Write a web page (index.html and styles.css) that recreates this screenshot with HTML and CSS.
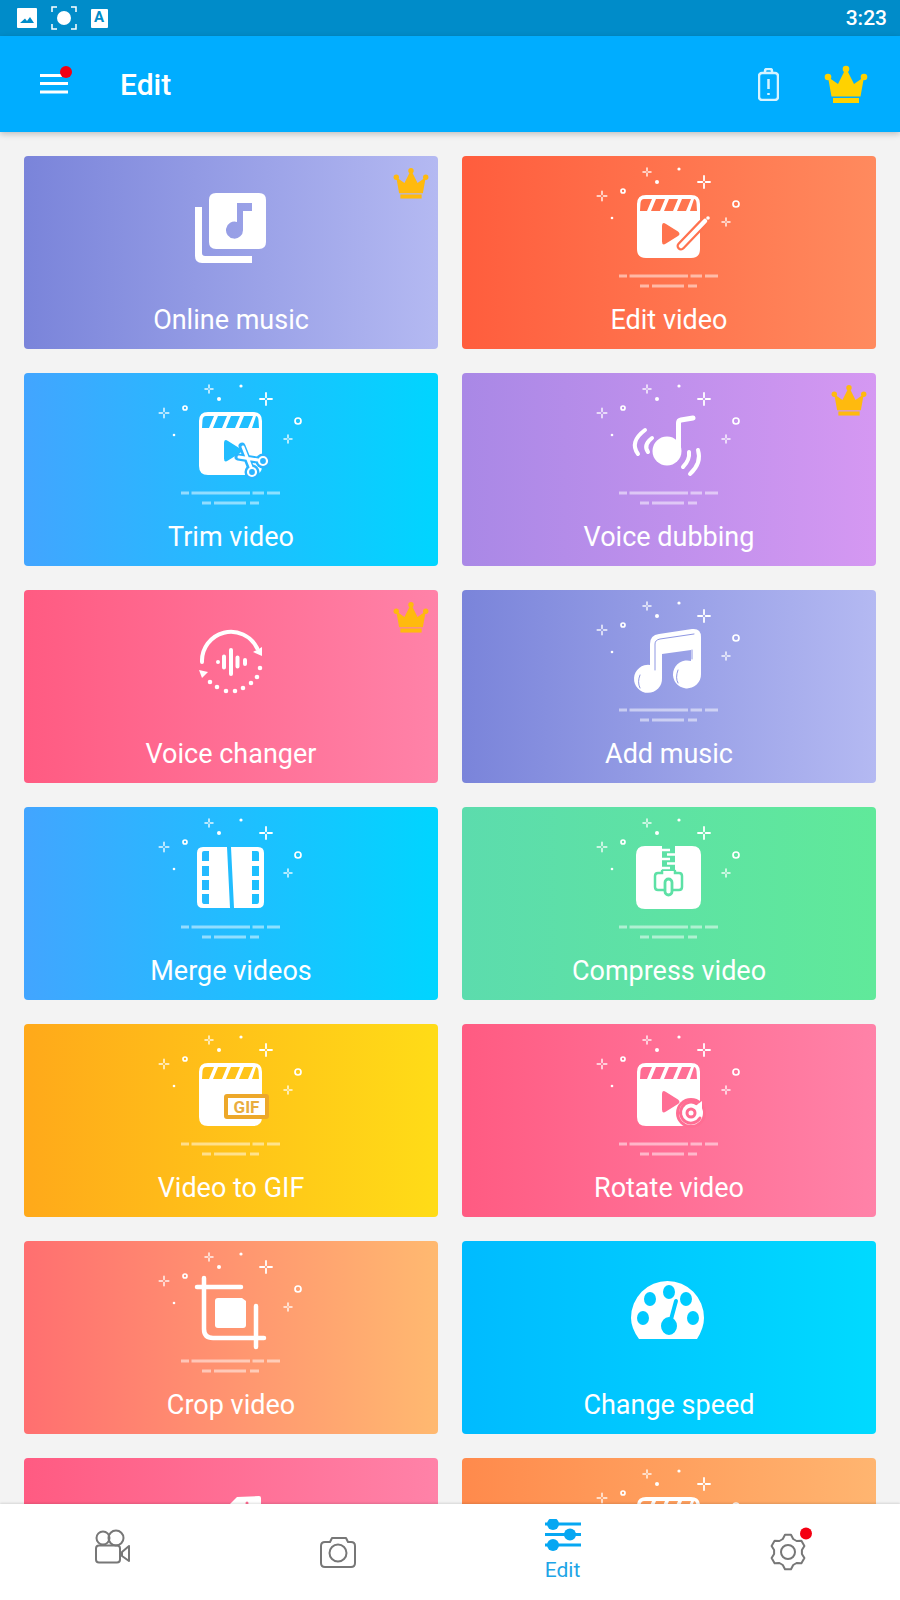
FILE: index.html
```html
<!DOCTYPE html>
<html lang="en">
<head>
    <meta charset="UTF-8">
    <meta name="viewport" content="width=device-width, initial-scale=1.0">
    <title>Edit</title>
    <link rel="stylesheet" href="styles.css">
</head>
<body>
    <svg class="defs" width="0" height="0">
        <defs>
            <g id="sparkles">
                <path class="spark thin" d="M135.200 40h3.300M141.500 40h3.300M140 35.200v3.300M140 41.500v3.300"/>
                <path class="spark thin" d="M181 16h2.700M186.300 16h2.700M185 12v2.700M185 17.300v2.700"/>
                <path class="spark" d="M236 26h4.300M243.700 26h4.300M242 20v4.300M242 27.700v4.300"/>
                <path class="spark thin" d="M260 66h2.700M265.300 66h2.700M264 62v2.700M264 67.300v2.700"/>
                <circle class="dot" cx="195" cy="26" r="2"/>
                <circle class="dot" cx="217" cy="13" r="1.600"/>
                <circle class="dot" cx="150" cy="62" r="1.300"/>
                <circle class="ring" cx="161" cy="35" r="2"/>
                <circle class="ring" cx="274" cy="48" r="3"/>
                <path class="dash" d="M157 120h8M167.500 120h58.500M228.500 120h11.500M243 120h13"/>
                <path class="dash" d="M178 130h9M190 130h32M226 130h9"/>
            </g>
            <path id="clapper" fill-rule="evenodd" d="M184 39H229Q238 39 238 48V93Q238 102 229 102H184Q175 102 175 93V48Q175 39 184 39ZM182 43Q179 43 178.500 47L178 55H185L190 43ZM194 43L189 55H198L203 43ZM207 43L202 55H211L216 43ZM220 43L215 55H224L229 43ZM232 43L228 55H235L234.500 47Q234 43 232 43Z"/>
            <path id="clapper-play" fill-rule="evenodd" d="M184 39H229Q238 39 238 48V93Q238 102 229 102H184Q175 102 175 93V48Q175 39 184 39ZM182 43Q179 43 178.500 47L178 55H185L190 43ZM194 43L189 55H198L203 43ZM207 43L202 55H211L216 43ZM220 43L215 55H224L229 43ZM232 43L228 55H235L234.500 47Q234 43 232 43ZM200 70Q200 65.500 204 68L216 75.500Q219 78 216 80L204 87.500Q200 90 200 85.500Z"/>
            <g id="crown">
                <path d="M22 3L30 19L40 12L36.500 31.500H7.500L4 12L14 19Z"/>
                <circle cx="22" cy="4" r="3.300"/>
                <circle cx="4" cy="12" r="3.300"/>
                <circle cx="40" cy="12" r="3.300"/>
                <rect x="9" y="33" width="26" height="5"/>
            </g>
        </defs>
    </svg>

    <div class="status-bar">
        <svg class="status-icon" width="20" height="20" viewBox="0 0 20 20"><path fill="#fff" fill-rule="evenodd" d="M1 0H19Q20 0 20 1V19Q20 20 19 20H1Q0 20 0 19V1Q0 0 1 0ZM3 15H17L13 9L10 13L8 10.500Z"/></svg>
        <svg class="status-icon" width="26" height="24" viewBox="0 0 26 24">
            <path class="bracket" d="M1 6V1H6M20 1H25V6M25 18V23H20M6 23H1V18"/>
            <circle cx="13" cy="12" r="7" fill="#fff"/>
        </svg>
        <svg class="status-icon" width="17" height="19" viewBox="0 0 17 19">
            <rect width="17" height="19" rx="1" fill="#fff"/>
            <text class="status-a" x="8" y="13">A</text>
        </svg>
        <span class="time">3:23</span>
    </div>

    <header class="app-bar">
        <svg class="menu" width="34" height="30" viewBox="0 0 34 30">
            <path d="M0 9.500H28M0 17.500H28M0 26H28"/>
            <circle cx="26" cy="6" r="6"/>
        </svg>
        <h1 class="title">Edit</h1>
        <svg class="battery" width="21" height="33" viewBox="0 0 21 33">
            <path d="M7 5V3Q7 1 9 1H12Q14 1 14 3V5"/>
            <rect x="1" y="5" width="19" height="27" rx="3"/>
            <path d="M10.500 11V21M10.500 25V27"/>
        </svg>
        <svg class="crown-top" width="44" height="38" viewBox="0 0 44 38"><use href="#crown"/></svg>
    </header>

    <main class="content">
        <div class="grid">
            <div class="card periwinkle">
                <svg class="art" viewBox="0 0 414 143">
                    <path class="solid" fill-rule="evenodd" d="M192 37H235Q242 37 242 44V86Q242 93 235 93H192Q185 93 185 86V44Q185 37 192 37ZM213 47V66A8.500 8.500 0 1 0 219 74V55H228V47Z"/>
                    <path class="solid" d="M171 51H178V97Q178 100 181 100H228V107H178Q171 107 171 100Z"/>
                </svg>
                <svg class="crown" viewBox="0 0 44 38"><use href="#crown"/></svg>
                <span class="label">Online music</span>
            </div>

            <div class="card tomato">
                <svg class="art" viewBox="0 0 414 143">
                    <use href="#sparkles"/>
                    <use class="solid" href="#clapper-play"/>
                    <path class="cut" stroke-width="9" d="M219 90L240 68"/>
                    <path class="tool" stroke-width="4.500" d="M219 90L243 65"/>
                    <circle class="dot" cx="246" cy="62" r="1.800"/>
                </svg>
                <span class="label">Edit video</span>
            </div>

            <div class="card blue">
                <svg class="art" viewBox="0 0 414 143">
                    <use href="#sparkles"/>
                    <use class="solid" href="#clapper-play"/>
                    <path class="cut" stroke-width="7" d="M228 98L218 73M239 88L214 84"/>
                    <circle class="cut-fill" cx="239" cy="88" r="7.500"/>
                    <circle class="cut-fill" cx="228" cy="99" r="7.500"/>
                    <path class="tool" stroke-width="3" d="M227 94L219 74M234 87L215 84"/>
                    <circle class="tool" stroke-width="2.200" cx="239" cy="88" r="4"/>
                    <circle class="tool" stroke-width="2.200" cx="228" cy="99" r="4"/>
                </svg>
                <span class="label">Trim video</span>
            </div>

            <div class="card violet">
                <svg class="art" viewBox="0 0 414 143">
                    <use href="#sparkles"/>
                    <circle class="solid" cx="205" cy="78" r="14.500"/>
                    <path class="tool" stroke-width="5" d="M216.500 78V50Q216.500 47.500 219 47L231 45"/>
                    <path class="tool" stroke-width="4" d="M183 57Q167 69 176 81M190 65Q181 72 186 79M236 77Q240 90 228 101M227 79Q228 87 221 94"/>
                </svg>
                <svg class="crown" viewBox="0 0 44 38"><use href="#crown"/></svg>
                <span class="label">Voice dubbing</span>
            </div>

            <div class="card pink">
                <svg class="art" viewBox="0 0 414 143">
                    <path class="tool" stroke-width="4" d="M178 72A29 29 0 0 1 233 58"/>
                    <path class="solid" d="M238 57V66L229 62Z"/>
                    <path class="solid" d="M175 80L184 82L178 88Z"/>
                    <path class="tool" stroke-width="4.600" d="M236 78V78M233 87V87M227 93V93M219 98V98M211 101V101M202 101V101M193 97V97M186 92V92"/>
                    <path class="tool" stroke-width="4" d="M194 72V72M200 66.500V77.500M207 60V84M213.500 67.500V76.500M221 70V74"/>
                </svg>
                <svg class="crown" viewBox="0 0 44 38"><use href="#crown"/></svg>
                <span class="label">Voice changer</span>
            </div>

            <div class="card periwinkle">
                <svg class="art" viewBox="0 0 414 143">
                    <use href="#sparkles"/>
                    <path class="solid" d="M188 54Q188 45 197 44L230 39Q239 38 239 47V84A14 14 0 1 1 229 71V60L200 64V88A14 14 0 1 1 188 75Z"/>
                    <path class="cut" stroke-width="1" d="M193 80V54Q193 50 198 49L232 44M230 60V69M178 98Q175 92 178 85M216 93Q213 88 216 80"/>
                </svg>
                <span class="label">Add music</span>
            </div>

            <div class="card blue">
                <svg class="art" viewBox="0 0 414 143">
                    <use href="#sparkles"/>
                    <path class="solid" fill-rule="evenodd" d="M179 40H203L206 101H179Q173 101 173 95V46Q173 40 179 40ZM180 44Q178 44 178 46V54H185V44ZM178 59V69H185V59ZM178 73V83H185V73ZM178 87V94Q178 97 180 97H185V87Z"/>
                    <path class="solid" fill-rule="evenodd" d="M207 40H234Q240 40 240 46V95Q240 101 234 101H210ZM228 44V54H235V46Q235 44 233 44ZM228 59V69H235V59ZM228 73V83H235V73ZM228 87V97H233Q235 97 235 94V87Z"/>
                </svg>
                <span class="label">Merge videos</span>
            </div>

            <div class="card mint">
                <svg class="art" viewBox="0 0 414 143">
                    <use href="#sparkles"/>
                    <path class="solid" d="M183 39H230Q239 39 239 48V93Q239 102 230 102H183Q174 102 174 93V48Q174 39 183 39Z"/>
                    <rect class="cut-fill" x="200" y="39" width="13" height="25"/>
                    <path class="zip" d="M200 43H208M205 47.500H213M200 52H208M205 56.500H213M200 61H208"/>
                    <path class="cut" stroke-width="2.500" d="M200 64V66H196Q193 66 193 69V80Q193 83 196 83H217Q220 83 220 80V69Q220 66 217 66H213V64"/>
                    <rect class="zip-tab" x="203" y="72" width="7" height="16" rx="3.500"/>
                </svg>
                <span class="label">Compress video</span>
            </div>

            <div class="card amber">
                <svg class="art" viewBox="0 0 414 143">
                    <use href="#sparkles"/>
                    <use class="solid" href="#clapper"/>
                    <rect x="200" y="70" width="45" height="25" rx="3" class="gif-box"/>
                    <rect x="204" y="74" width="37" height="17" class="gif-fill"/>
                    <text class="gif-text" x="222.500" y="88.500">GIF</text>
                </svg>
                <span class="label">Video to GIF</span>
            </div>

            <div class="card pink">
                <svg class="art" viewBox="0 0 414 143">
                    <use href="#sparkles"/>
                    <use class="solid" href="#clapper-play"/>
                    <circle class="cut-fill" cx="229" cy="89" r="15"/>
                    <circle class="solid" cx="229" cy="89" r="12"/>
                    <path class="cut" stroke-width="3" d="M235 80A10.500 10.500 0 1 0 238 94"/>
                    <circle class="cut-fill" cx="229" cy="89" r="5.500"/>
                    <circle class="solid" cx="229" cy="89" r="2.500"/>
                    <path class="solid" d="M240 77V87L231 84Z"/>
                </svg>
                <span class="label">Rotate video</span>
            </div>

            <div class="card coral">
                <svg class="art" viewBox="0 0 414 143">
                    <use href="#sparkles"/>
                    <path class="tool" stroke-width="4.500" d="M180 37V88Q180 97 189 97H240M173 46H217M232 65V106"/>
                    <path class="solid" d="M194 57H218L222 60V84Q222 87 219 87H194Q191 87 191 84V60Q191 57 194 57Z"/>
                </svg>
                <span class="label">Crop video</span>
            </div>

            <div class="card sky">
                <svg class="art" viewBox="0 0 414 143">
                    <path class="solid" fill-rule="evenodd" d="M177 98Q169 87 169 77A36.500 37 0 0 1 242 77Q242 87 235 98ZM207 44A6 7 0 1 0 207 58A6 7 0 1 0 207 44ZM188 51A6 7 0 1 0 188 65A6 7 0 1 0 188 51ZM224 51A6 7 0 1 0 224 65A6 7 0 1 0 224 51ZM181 70A6 7 0 1 0 181 84A6 7 0 1 0 181 70ZM231 70A6 7 0 1 0 231 84A6 7 0 1 0 231 70ZM207 76A8 9 0 1 0 207 94A8 9 0 1 0 207 76Z"/>
                    <path class="cut" stroke-width="4" d="M208 82L214 60"/>
                </svg>
                <span class="label">Change speed</span>
            </div>

            <div class="card pink">
                <svg class="art" viewBox="0 0 414 143">
                    <path class="solid" d="M213 39L235 38Q237 38 237 40V60H206V46Z"/>
                    <circle class="cut-fill" cx="223" cy="45" r="1.500"/>
                </svg>
            </div>

            <div class="card orange">
                <svg class="art" viewBox="0 0 414 143">
                    <use href="#sparkles"/>
                    <use class="solid" href="#clapper"/>
                </svg>
            </div>
        </div>
    </main>

    <nav class="tabs">
        <div class="tab">
            <svg class="tab-icon lift" width="36" height="36" viewBox="0 0 36 36">
                <circle cx="8" cy="10" r="6.500"/>
                <circle cx="21" cy="10" r="7.500"/>
                <rect x="1" y="17.500" width="24" height="17" rx="3"/>
                <path d="M27 24L34 18V33L27 28Z"/>
            </svg>
        </div>
        <div class="tab">
            <svg class="tab-icon" width="36" height="32" viewBox="0 0 36 32">
                <path d="M5 6H10L12 2H26L28 6H31Q35 6 35 10V27Q35 31 31 31H5Q1 31 1 27V10Q1 6 5 6Z"/>
                <circle cx="18" cy="17" r="8.500"/>
            </svg>
        </div>
        <div class="tab tab-active">
            <svg class="sliders" width="36" height="32" viewBox="0 0 36 32">
                <path d="M0 5H36M0 15.500H36M0 26H36"/>
                <circle cx="8" cy="5" r="6"/>
                <circle cx="25" cy="15.500" r="6"/>
                <circle cx="8" cy="26" r="6"/>
            </svg>
            <span class="tab-label">Edit</span>
        </div>
        <div class="tab">
            <svg class="tab-icon gear" width="44" height="44" viewBox="0 -3 44 44">
                <g transform="translate(18 22)">
                    <path d="M-5.200 -13L-3 -17.200L3 -17.200L5.200 -13L8.600 -11L13.400 -11.200L16.400 -6L13.900 -1.900L13.900 1.900L16.400 6L13.400 11.200L8.600 11L5.200 13L3 17.200L-3 17.200L-5.200 13L-8.600 11L-13.400 11.200L-16.400 6L-13.900 1.900L-13.900 -1.900L-16.400 -6L-13.400 -11.200L-8.600 -11Z"/>
                    <circle r="7"/>
                </g>
                <circle class="gear-dot" cx="36" cy="3.500" r="6"/>
            </svg>
        </div>
    </nav>
</body>
</html>
```

FILE: styles.css
```css
* {
    box-sizing: border-box;
}

html, body {
    margin: 0;
    padding: 0;
}

body {
    width: 900px;
    height: 1600px;
    display: flex;
    flex-direction: column;
    overflow: hidden;
    font-family: Roboto, "Liberation Sans", sans-serif;
    background-color: #f3f3f3;
}

.defs {
    display: none;
}

/* status bar */
.status-bar {
    height: 36px;
    flex: none;
    display: flex;
    align-items: center;
    gap: 14px;
    padding: 0 13px 0 17px;
    background-color: #008cc9;
}

.status-icon {
    display: block;
}

.bracket {
    fill: none;
    stroke: #fff;
    stroke-width: 1.500;
}

.status-a {
    font-size: 15px;
    font-weight: 700;
    fill: #008cc9;
    text-anchor: middle;
}

.time {
    margin-left: auto;
    font-size: 21px;
    font-weight: 500;
    color: #fff;
}

/* app bar */
.app-bar {
    height: 96px;
    flex: none;
    display: flex;
    align-items: center;
    padding: 0 32px 0 40px;
    background-color: #00adff;
    box-shadow: 0 2px 6px rgba(0, 0, 0, 0.22);
    position: relative;
    z-index: 2;
}

.menu {
    margin-bottom: 6px;
}

.menu path {
    fill: none;
    stroke: #fff;
    stroke-width: 3;
}

.menu circle {
    fill: #f40012;
}

.title {
    margin: 0 0 0 46px;
    font-size: 30px;
    font-weight: 500;
    color: #fff;
}

.battery {
    margin-left: auto;
    fill: none;
    stroke: #d6f3ff;
    stroke-width: 2.500;
}

.crown-top {
    margin-left: 45px;
    fill: #ffd200;
}

/* cards */
.content {
    flex: 1;
    min-height: 0;
    overflow: hidden;
    padding: 24px;
}

.grid {
    display: grid;
    grid-template-columns: 1fr 1fr;
    grid-auto-rows: 193px;
    gap: 24px;
}

.card {
    position: relative;
    display: flex;
    flex-direction: column;
    align-items: center;
    border-radius: 4px;
    color: #fff;
}

.art {
    display: block;
    width: 414px;
    height: 143px;
    flex: none;
}

.label {
    line-height: 42px;
    font-size: 27px;
}

.crown {
    position: absolute;
    top: 11px;
    right: 9px;
    width: 36px;
    height: 32px;
    fill: #ffba0e;
}

.periwinkle { background: linear-gradient(90deg, #7a84da, #b4b9f2); --cut: #8f97e3; }
.tomato { background: linear-gradient(90deg, #ff5d3d, #ff8a5e); --cut: #ff724f; }
.blue { background: linear-gradient(90deg, #42a5ff, #00d5ff); --cut: #2bb4ff; }
.violet { background: linear-gradient(90deg, #a988e6, #d598f2); --cut: #bc90eb; }
.pink { background: linear-gradient(90deg, #ff5b82, #ff82a8); --cut: #ff6d93; }
.mint { background: linear-gradient(90deg, #5cdcad, #60e99a); --cut: #5de1a6; }
.amber { background: linear-gradient(90deg, #ffa91a, #ffdc17); --cut: #ffbf1a; }
.coral { background: linear-gradient(90deg, #ff6f70, #ffb970); --cut: #ff9070; }
.sky { background: linear-gradient(90deg, #00bbff, #00daff); --cut: #00c8ff; }
.orange { background: linear-gradient(90deg, #ff8a4c, #ffb570); --cut: #ff9e5c; }

/* icon parts */
.solid {
    fill: #fff;
}

.spark {
    fill: none;
    stroke: #fff;
    stroke-width: 1.800;
    stroke-linecap: round;
}

.spark.thin {
    stroke-width: 1.500;
    opacity: 0.9;
}

.dot {
    fill: #fff;
}

.ring {
    fill: none;
    stroke: #fff;
    stroke-width: 1.700;
}

.dash {
    fill: none;
    stroke: #fff;
    stroke-opacity: 0.5;
    stroke-width: 3;
}

.tool {
    fill: none;
    stroke: #fff;
    stroke-linecap: round;
    stroke-linejoin: round;
}

.cut {
    fill: none;
    stroke: var(--cut);
    stroke-linecap: round;
}

.cut-fill {
    fill: var(--cut);
}

.zip {
    fill: none;
    stroke: #fff;
    stroke-width: 2.400;
}

.zip-tab {
    fill: #fff;
    stroke: var(--cut);
    stroke-width: 2.800;
}

.gif-box {
    fill: #eda82a;
}

.gif-fill {
    fill: #fff;
}

.gif-text {
    font-size: 17px;
    font-weight: 700;
    fill: #e9ad3e;
    text-anchor: middle;
}

/* bottom tabs */
.tabs {
    height: 96px;
    flex: none;
    display: grid;
    grid-template-columns: repeat(4, 1fr);
    background-color: #fff;
    box-shadow: 0 -1px 2px rgba(0, 0, 0, 0.12);
    position: relative;
    z-index: 2;
}

.tab {
    display: flex;
    flex-direction: column;
    align-items: center;
    justify-content: center;
}

.tab-icon {
    fill: none;
    stroke: #777;
    stroke-width: 2;
    stroke-linejoin: round;
}

.lift {
    margin-bottom: 12px;
}

.gear {
    margin-left: 8px;
    margin-bottom: 6px;
}

.gear-dot {
    fill: #f40012;
    stroke: none;
}

.tab-active {
    padding-bottom: 5px;
}

.sliders {
    margin-bottom: 2px;
}

.sliders path {
    fill: none;
    stroke: #06a7f2;
    stroke-width: 3;
}

.sliders circle {
    fill: #06a7f2;
}

.tab-label {
    margin-top: 7px;
    font-size: 21px;
    line-height: 20px;
    color: #1ea5e6;
}
```
